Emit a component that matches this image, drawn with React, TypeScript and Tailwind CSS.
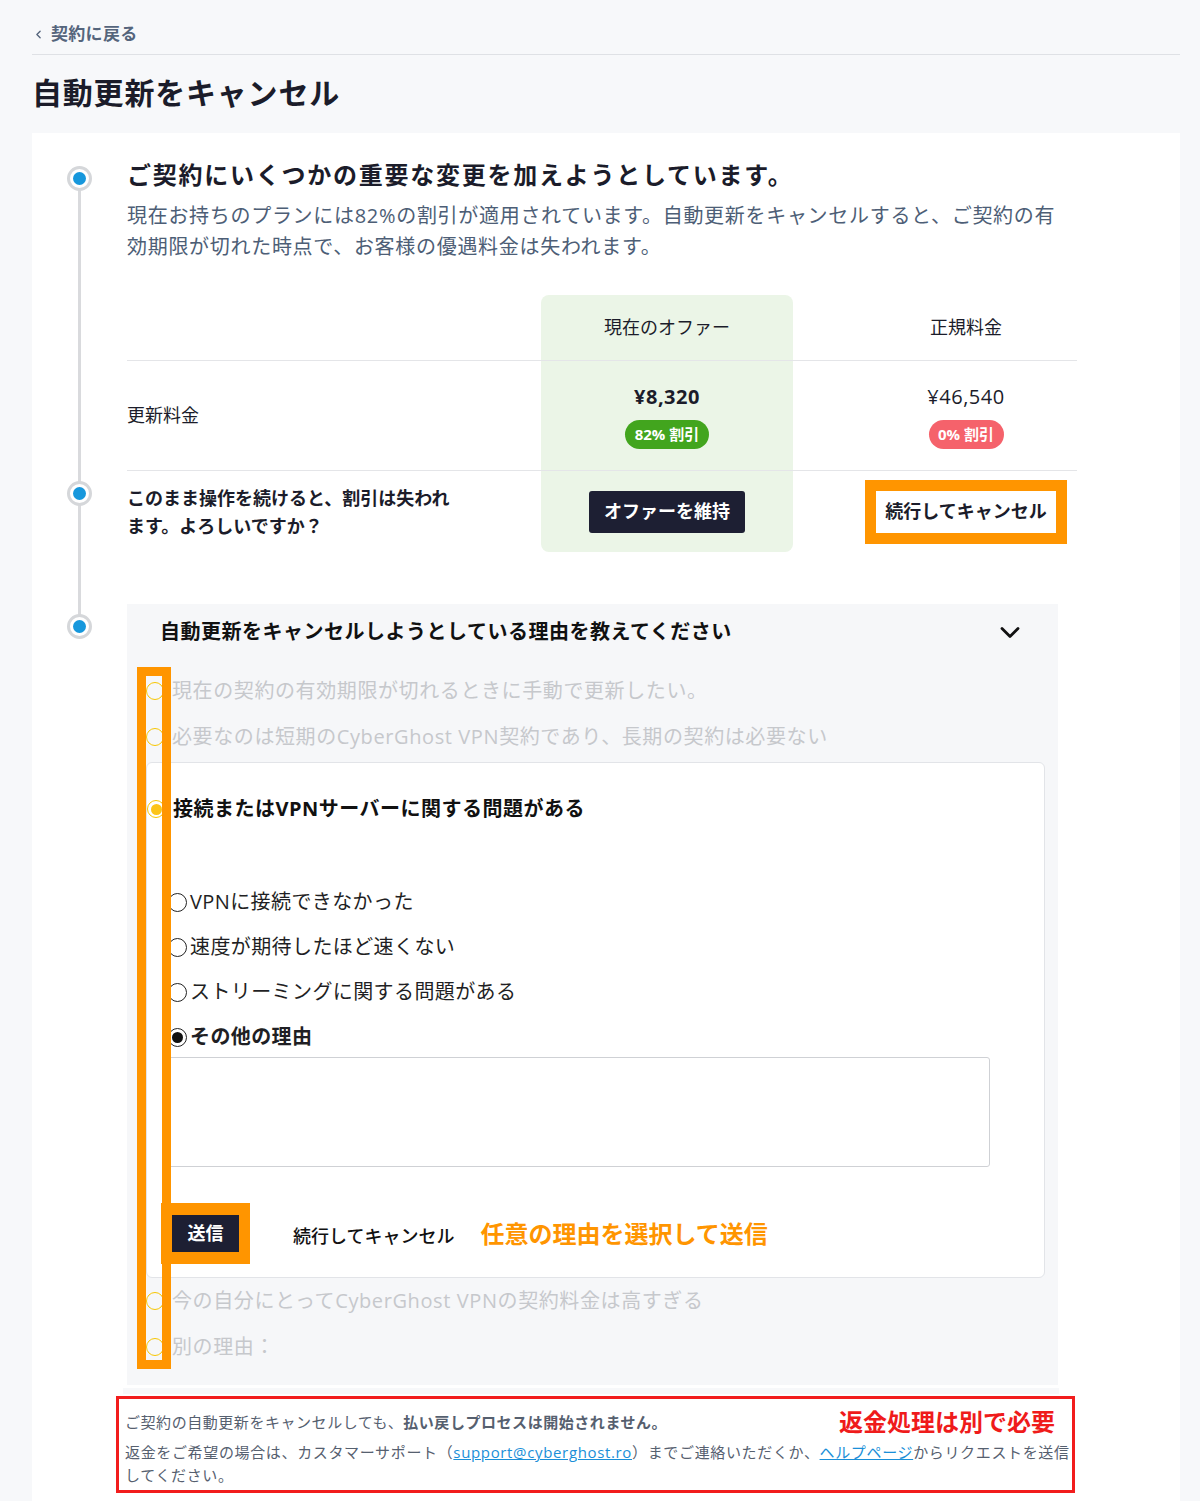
import { ChevronLeft } from 'lucide-react'

const FONT = '"Open Sans", "Noto Sans CJK JP", sans-serif'

function StepDot({ top }: { top: number }) {
  return (
    <div
      className="absolute left-[35px] flex h-[25px] w-[25px] items-center justify-center rounded-full border-[3px] border-[#d5d7da] bg-white"
      style={{ top: top - 12 }}
    >
      <div className="h-[13px] w-[13px] rounded-full bg-[#1697dc]" />
    </div>
  )
}

function FadedOption({ label }: { label: string }) {
  return (
    <div className="flex h-[46px] items-center gap-[8px] pl-[19px]">
      <span className="h-[18px] w-[18px] shrink-0 rounded-full border-[1.5px] border-[#f7c600]" />
      <span className="text-[20px] leading-7 tracking-[0.6px] text-[#c6c8cc]">{label}</span>
    </div>
  )
}

function SubOption({ label, checked = false }: { label: string; checked?: boolean }) {
  return (
    <div className="flex h-[32px] items-center gap-[3px] pl-[21px]">
      <span className="flex h-[19px] w-[19px] shrink-0 items-center justify-center rounded-full border border-[#222]">
        {checked && <span className="h-[11px] w-[11px] rounded-full bg-[#111]" />}
      </span>
      <span className={`text-[20px] leading-7 tracking-[0.4px] text-[#1f1f24] ${checked ? 'font-bold' : ''}`}>{label}</span>
    </div>
  )
}

export default function App() {
  return (
    <div className="min-h-[1501px] bg-[#f7f8fa] px-8 pb-10" style={{ fontFamily: FONT }}>
      {/* 戻るリンク */}
      <div className="flex items-center gap-[6px] pt-[22px] pb-[8px] text-[17px] font-semibold leading-6 tracking-[0.3px] text-[#55657c]">
        <ChevronLeft size={13} strokeWidth={2.5} />
        <span>契約に戻る</span>
      </div>
      <div className="mr-[-12px] h-px bg-[#dfe1e5]" />

      <h1 className="mt-[18px] text-[30px] font-bold leading-10 tracking-[0.8px] text-[#1b1c2a]">自動更新をキャンセル</h1>

      <div className="relative mt-[20px] flex w-[1148px] bg-white">
        {/* タイムライン */}
        <div className="relative w-[95px] shrink-0">
          <div className="absolute left-[46px] top-[45px] h-[448px] w-[3px] bg-[#d9dadd]" />
          <StepDot top={45} />
          <StepDot top={360} />
          <StepDot top={493} />
        </div>

        <div className="w-[950px] pt-[26px] pb-[8px]">
          <h2 className="text-[24px] font-bold leading-8 tracking-[1.75px] text-[#1b1c2a]">
            ご契約にいくつかの重要な変更を加えようとしています。
          </h2>
          <p className="mt-[9px] w-[940px] text-[20px] leading-[31px] tracking-[0.7px] text-[#4d5e76]">
            現在お持ちのプランには82%の割引が適用されています。自動更新をキャンセルすると、ご契約の有効期限が切れた時点で、お客様の優遇料金は失われます。
          </p>

          {/* 料金テーブル */}
          <div className="mt-[33px] grid grid-cols-[414px_252px_284px] grid-rows-[66px_110px_81px] text-[#1b1c2a]">
            <div className="col-start-2 row-span-3 row-start-1 rounded-lg bg-[#ebf5e7]" />

            <div className="col-start-1 row-start-1 border-b border-[#e4e5e8]" />
            <div className="col-start-2 row-start-1 flex items-center justify-center border-b border-[#e4e5e8] text-[18px]">
              現在のオファー
            </div>
            <div className="col-start-3 row-start-1 flex items-center justify-center border-b border-[#e4e5e8] pl-[62px] text-[18px]">
              正規料金
            </div>

            <div className="col-start-1 row-start-2 flex items-center border-b border-[#e4e5e8] text-[18px]">
              更新料金
            </div>
            <div className="col-start-2 row-start-2 flex flex-col items-center justify-center gap-[9px] border-b border-[#e4e5e8]">
              <span className="text-[20px] font-bold leading-7 tracking-[0.5px]">¥8,320</span>
              <span className="flex h-[29px] w-[84px] items-center justify-center rounded-full bg-[#42a51e] text-[15px] font-bold text-white">
                82% 割引
              </span>
            </div>
            <div className="col-start-3 row-start-2 flex flex-col items-center justify-center gap-[9px] border-b border-[#e4e5e8] pl-[62px]">
              <span className="text-[20px] leading-7 tracking-[0.5px]">¥46,540</span>
              <span className="flex h-[29px] w-[75px] items-center justify-center rounded-full bg-[#f5626b] text-[15px] font-bold text-white">
                0% 割引
              </span>
            </div>

            <div className="col-start-1 row-start-3 flex items-center">
              <p className="w-[330px] text-[18px] font-bold leading-7">
                このまま操作を続けると、割引は失われます。よろしいですか？
              </p>
            </div>
            <div className="col-start-2 row-start-3 flex items-center justify-center">
              <button className="h-[42px] w-[156px] rounded-[3px] bg-[#1d1f33] text-[18px] font-bold text-white">
                オファーを維持
              </button>
            </div>
            <div className="col-start-3 row-start-3 flex items-center pl-[72px]">
              <button className="flex h-[64px] w-[202px] items-center justify-center border-[11px] border-[#ff9500] bg-white text-[18px] font-semibold">
                続行してキャンセル
              </button>
            </div>
          </div>

          {/* 理由 */}
          <div className="relative mt-[52px] w-[931px] bg-[#f6f7f9] pb-[15px]">
            <div className="flex items-center justify-between pt-[14px] pl-[33px] pr-[38px]">
              <span className="text-[20px] font-bold leading-7 tracking-[0.5px] text-[#111]">
                自動更新をキャンセルしようとしている理由を教えてください
              </span>
              <svg width="20" height="13" viewBox="0 0 20 13" fill="none" stroke="#111" strokeWidth="2.8" strokeLinecap="round" strokeLinejoin="round">
                <polyline points="2,2.5 10,10.5 18,2.5" />
              </svg>
            </div>

            <div className="mt-[22px]">
              <FadedOption label="現在の契約の有効期限が切れるときに手動で更新したい。" />
              <FadedOption label="必要なのは短期のCyberGhost VPN契約であり、長期の契約は必要ない" />
            </div>

            <div className="ml-[19px] mt-[2px] w-[899px] rounded-md border border-[#e2e4e8] bg-white pt-[23px] pb-[13px]">
              <div className="flex h-[46px] items-center gap-[8px]">
                <span className="flex h-[18px] w-[18px] shrink-0 items-center justify-center rounded-full border-[1.5px] border-[#f7c600]">
                  <span className="h-[11px] w-[11px] rounded-full bg-[#fcc419]" />
                </span>
                <span className="text-[20px] font-bold leading-7 tracking-[0.5px] text-[#111]">
                  接続またはVPNサーバーに関する問題がある
                </span>
              </div>

              <div className="mt-[54px] flex flex-col gap-[13px]">
                <SubOption label="VPNに接続できなかった" />
                <SubOption label="速度が期待したほど速くない" />
                <SubOption label="ストリーミングに関する問題がある" />
                <SubOption label="その他の理由" checked />
              </div>

              <textarea className="ml-[21px] mt-[4px] block h-[110px] w-[822px] resize-none rounded-[3px] border border-[#cfd1d5] bg-white" />

              <div className="mt-[36px] flex items-center pl-[14px]">
                <div className="bg-[#ff9500] px-[11px] py-[12px]">
                  <button className="h-[37px] w-[67px] bg-[#1d1f33] text-[18px] font-bold text-white">送信</button>
                </div>
                <span className="ml-[43px] mt-[6px] text-[18px] font-medium text-[#111]">続行してキャンセル</span>
                <span className="ml-[26px] text-[24px] font-bold text-[#ff9500]">任意の理由を選択して送信</span>
              </div>
            </div>

            <FadedOption label="今の自分にとってCyberGhost VPNの契約料金は高すぎる" />
            <FadedOption label="別の理由：" />

            {/* 注釈の枠 */}
            <div className="absolute left-[10px] top-[63px] h-[702px] w-[34px] border-[9px] border-[#ff9500]" />
          </div>

          <div className="mt-[3px] h-[6px] w-[936px] -ml-[4px] bg-[#f7f8fa]" />

          {/* 返金の注意 */}
          <div className="-ml-[11px] mt-[2px] w-[959px] border-[3px] border-[#f21d1d] pt-[7px] pb-[3px] pl-[6px] pr-[2px] text-[15px] text-[#56606f]">
            <div className="flex h-[32px] items-center justify-between pr-[15px]">
              <span className="tracking-[0.55px]">
                ご契約の自動更新をキャンセルしても、<span className="font-semibold">払い戻しプロセスは開始されません。</span>
              </span>
              <span className="text-[24px] font-bold text-[#ef1b1b]">返金処理は別で必要</span>
            </div>
            <p className="mt-[3px] leading-[23px] tracking-[0.65px]">
              <span className="whitespace-nowrap">
                返金をご希望の場合は、カスタマーサポート（
                <span className="text-[#1a8fd8] underline">support@cyberghost.ro</span>
                ）までご連絡いただくか、<span className="text-[#1a8fd8] underline">ヘルプページ</span>からリクエストを送信
              </span>
              <br />
              してください。
            </p>
          </div>
        </div>
      </div>
    </div>
  )
}
